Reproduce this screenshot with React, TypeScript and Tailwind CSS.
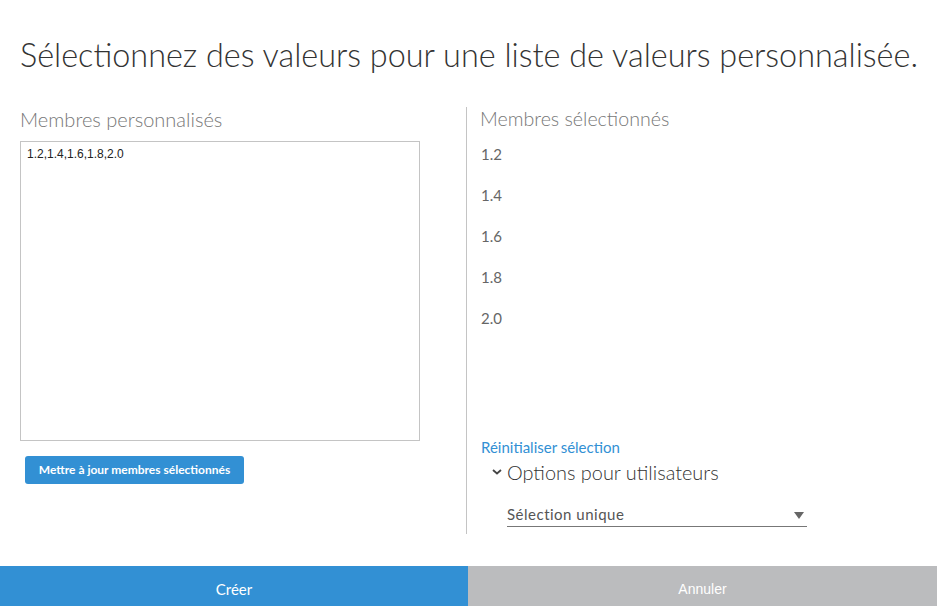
import React from "react";

export default function App() {
  const items = ["1.2", "1.4", "1.6", "1.8", "2.0"];
  return (
    <div className="w-[937px] h-[606px] bg-white flex flex-col overflow-hidden" style={{ fontFamily: "Lato, 'Liberation Sans', sans-serif" }}>
      <div className="flex-1 flex flex-col px-[20px]">
        <h1 className="mt-[33px] text-[32.4px] font-light text-[#333] leading-[44px] whitespace-nowrap">
          Sélectionnez des valeurs pour une liste de valeurs personnalisée.
        </h1>
        <div className="mt-[30px] flex">
          <div className="w-[446px] flex flex-col">
            <div className="text-[20px] font-light text-[#777] leading-[24px]">Membres personnalisés</div>
            <textarea
              className="mt-[10px] w-[400px] h-[300px] border border-[#c4c4c4] resize-none px-[6px] py-[3px] text-[12px] text-[#222] outline-none"
              style={{ fontFamily: "'Liberation Sans', Arial, sans-serif" }}
              defaultValue="1.2,1.4,1.6,1.8,2.0"
            />
            <button className="mt-[15px] ml-[5px] w-[219px] h-[28px] rounded-[3px] bg-[#3290d4] text-white text-[12px] font-bold">
              Mettre à jour membres sélectionnés
            </button>
          </div>
          <div className="w-px bg-[#c4c4c4] h-[427px]" />
          <div className="flex-1 pl-[13px] flex flex-col">
            <div className="text-[19.6px] font-light text-[#777] leading-[24px]">Membres sélectionnés</div>
            <div className="mt-[13px] flex flex-col pl-[1px]">
              {items.map((v) => (
                <div key={v} className="h-[41px] text-[15px] text-[#666] leading-[20px]">{v}</div>
              ))}
            </div>
            <div className="mt-[88px] pl-[1px] text-[15px] text-[#3290d4] leading-[20px]">Réinitialiser sélection</div>
            <div className="flex items-center mt-[2px]">
              <svg width="10" height="6" viewBox="0 0 10 6" className="ml-[12px] mr-[5px]">
                <path d="M1 1 L5 4.5 L9 1" stroke="#444" strokeWidth="1.8" fill="none" />
              </svg>
              <span className="text-[19.9px] font-light text-[#333] leading-[26px]">Options pour utilisateurs</span>
            </div>
            <div className="ml-[27px] mt-[18px] w-[300px] border-b border-[#777] flex items-center justify-between h-[24px]">
              <span className="text-[15px] text-[#555] tracking-[0.5px]">Sélection unique</span>
              <svg width="12" height="10" viewBox="0 0 12 10" className="mr-[2px]">
                <path d="M1 2 L11 2 L6 9 Z" fill="#666" />
              </svg>
            </div>
          </div>
        </div>
      </div>
      <div className="h-[40px] flex">
        <button className="w-[468px] h-full bg-[#3290d4] text-white text-[15px] pt-[7px]">Créer</button>
        <button className="flex-1 h-full bg-[#bbbcbe] text-white text-[14px] pt-[7px]" style={{ fontFamily: "'Liberation Sans', Arial, sans-serif" }}>Annuler</button>
      </div>
    </div>
  );
}
